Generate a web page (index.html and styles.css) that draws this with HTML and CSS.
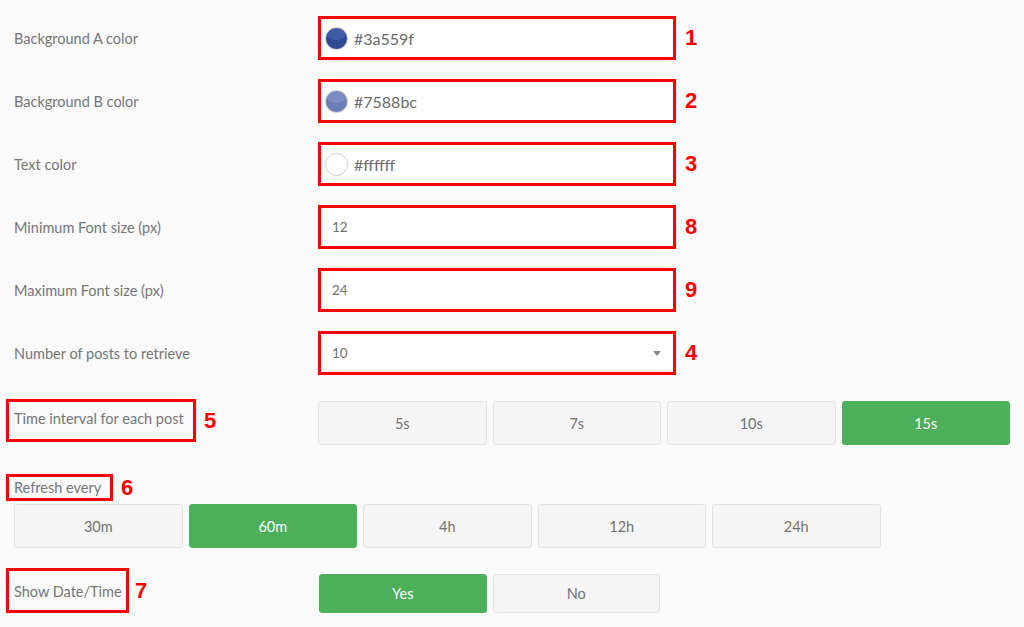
FILE: index.html
```html
<!DOCTYPE html>
<html lang="en">
<head>
<meta charset="utf-8">
<title>Settings</title>
<link rel="stylesheet" href="styles.css">
</head>
<body>
<div class="settings">
  <div class="row field-row">
    <div class="label">Background A color</div>
    <div class="field">
      <span class="swatch swatch-a"></span><span class="value">#3a559f</span>
    </div>
    <span class="num">1</span>
  </div>
  <div class="row field-row">
    <div class="label">Background B color</div>
    <div class="field">
      <span class="swatch swatch-b"></span><span class="value">#7588bc</span>
    </div>
    <span class="num">2</span>
  </div>
  <div class="row field-row">
    <div class="label">Text color</div>
    <div class="field">
      <span class="swatch swatch-c"></span><span class="value">#ffffff</span>
    </div>
    <span class="num">3</span>
  </div>
  <div class="row field-row">
    <div class="label">Minimum Font size (px)</div>
    <div class="field field-text"><span class="value">12</span></div>
    <span class="num">8</span>
  </div>
  <div class="row field-row">
    <div class="label">Maximum Font size (px)</div>
    <div class="field field-text"><span class="value">24</span></div>
    <span class="num">9</span>
  </div>
  <div class="row field-row last-field">
    <div class="label">Number of posts to retrieve</div>
    <div class="field field-text field-select"><span class="value">10</span><span class="caret"></span></div>
    <span class="num">4</span>
  </div>

  <div class="row interval-row">
    <div class="label">
      <span class="boxed boxed-tall">Time interval for each post</span><span class="num num-label">5</span>
    </div>
    <div class="btn-group">
      <button class="btn">5s</button>
      <button class="btn">7s</button>
      <button class="btn">10s</button>
      <button class="btn active">15s</button>
    </div>
  </div>

  <div class="refresh-block">
    <div class="refresh-label">
      <span class="boxed boxed-short">Refresh every</span><span class="num num-label">6</span>
    </div>
    <div class="btn-group refresh-group">
      <button class="btn">30m</button>
      <button class="btn active">60m</button>
      <button class="btn">4h</button>
      <button class="btn">12h</button>
      <button class="btn">24h</button>
    </div>
  </div>

  <div class="row show-row">
    <div class="label">
      <span class="boxed boxed-show">Show Date/Time</span><span class="num num-label num-7">7</span>
    </div>
    <div class="btn-group show-group">
      <button class="btn active">Yes</button>
      <button class="btn">No</button>
    </div>
  </div>
</div>
</body>
</html>
```

FILE: styles.css
```css
* { box-sizing: border-box; }

html, body {
  margin: 0;
  padding: 0;
  background: #fafafa;
}

body {
  font-family: Lato, "Open Sans", "Liberation Sans", sans-serif;
  font-size: 14px;
  color: #777;
  width: 1024px;
  height: 627px;
  overflow: hidden;
}

.settings {
  padding: 16px 0 0 14px;
}

.row {
  display: flex;
  align-items: center;
}

.label {
  width: 304px;
  flex: none;
  font-size: 14.5px;
  color: #767676;
  display: flex;
  align-items: center;
  white-space: nowrap;
}

.field-row {
  height: 44px;
  margin-bottom: 19px;
}

.field-row.last-field {
  margin-bottom: 24px;
}

.field {
  width: 358px;
  height: 44px;
  border: 3px solid #f00;
  background: #fff;
  display: flex;
  align-items: center;
  padding-left: 4px;
}

.field .value {
  font-size: 16px;
  color: #6a6a6a;
}

.field-text {
  padding-left: 11px;
}

.field-text .value {
  font-size: 13.5px;
  color: #707070;
}

.field-select {
  justify-content: space-between;
  padding-right: 12px;
}

.caret {
  width: 0;
  height: 0;
  border-left: 4px solid transparent;
  border-right: 4px solid transparent;
  border-top: 5px solid #888;
}

.swatch {
  width: 23px;
  height: 23px;
  border-radius: 50%;
  margin-right: 6px;
  border: 1px solid #d0d0d0;
  flex: none;
}

.swatch-a {
  background: radial-gradient(ellipse 80% 60% at 50% 20%, #3f5ba3 60%, #2f4a93 62%);
}

.swatch-b {
  background: radial-gradient(ellipse 80% 60% at 50% 20%, #7a8dc0 60%, #6a7eb5 62%);
}

.swatch-c {
  background: #fff;
  border-color: #cfcfcf;
}

.num {
  font-family: "Liberation Sans", Arial, sans-serif;
  font-weight: bold;
  font-size: 22px;
  color: #f00;
  margin-left: 9px;
  line-height: 1;
}

.num-label {
  margin-left: 8px;
}

.num-7 {
  margin-left: 6px;
}

.boxed {
  border: 3px solid #f00;
  margin-left: -8px;
  display: inline-flex;
  align-items: center;
  padding: 0 4px 0 5px;
}

.boxed-tall {
  height: 43px;
  width: 190px;
  padding-bottom: 4px;
}

.boxed-short {
  height: 27px;
  width: 107px;
}

.boxed-show {
  height: 45px;
  width: 123px;
  padding-top: 2px;
}

.interval-row {
  align-items: flex-start;
}

.interval-row .label {
  height: 43px;
}

.interval-row .btn-group {
  margin-top: 2px;
}

.btn-group {
  display: flex;
  gap: 6px;
}

.btn {
  width: 168.5px;
  height: 44px;
  border: 1px solid #e3e3e3;
  border-radius: 3px;
  background: #f5f5f5;
  color: #727272;
  font-family: Lato, "Open Sans", "Liberation Sans", sans-serif;
  font-size: 14.5px;
  padding: 0;
  margin: 0;
  text-align: center;
}

.btn.active {
  background: #4caf59;
  border-color: #4caf59;
  color: #fff;
}

.refresh-block {
  margin-top: 29px;
}

.refresh-label {
  display: flex;
  align-items: center;
  height: 27px;
  font-size: 14.5px;
  color: #767676;
  white-space: nowrap;
}

.refresh-group {
  margin-top: 3px;
}

.show-row {
  margin-top: 20px;
  align-items: flex-start;
}

.show-row .label {
  height: 45px;
  width: 305px;
}

.show-group {
  margin-top: 6px;
}

.show-group .btn {
  height: 39px;
  width: 167.5px;
}
```
